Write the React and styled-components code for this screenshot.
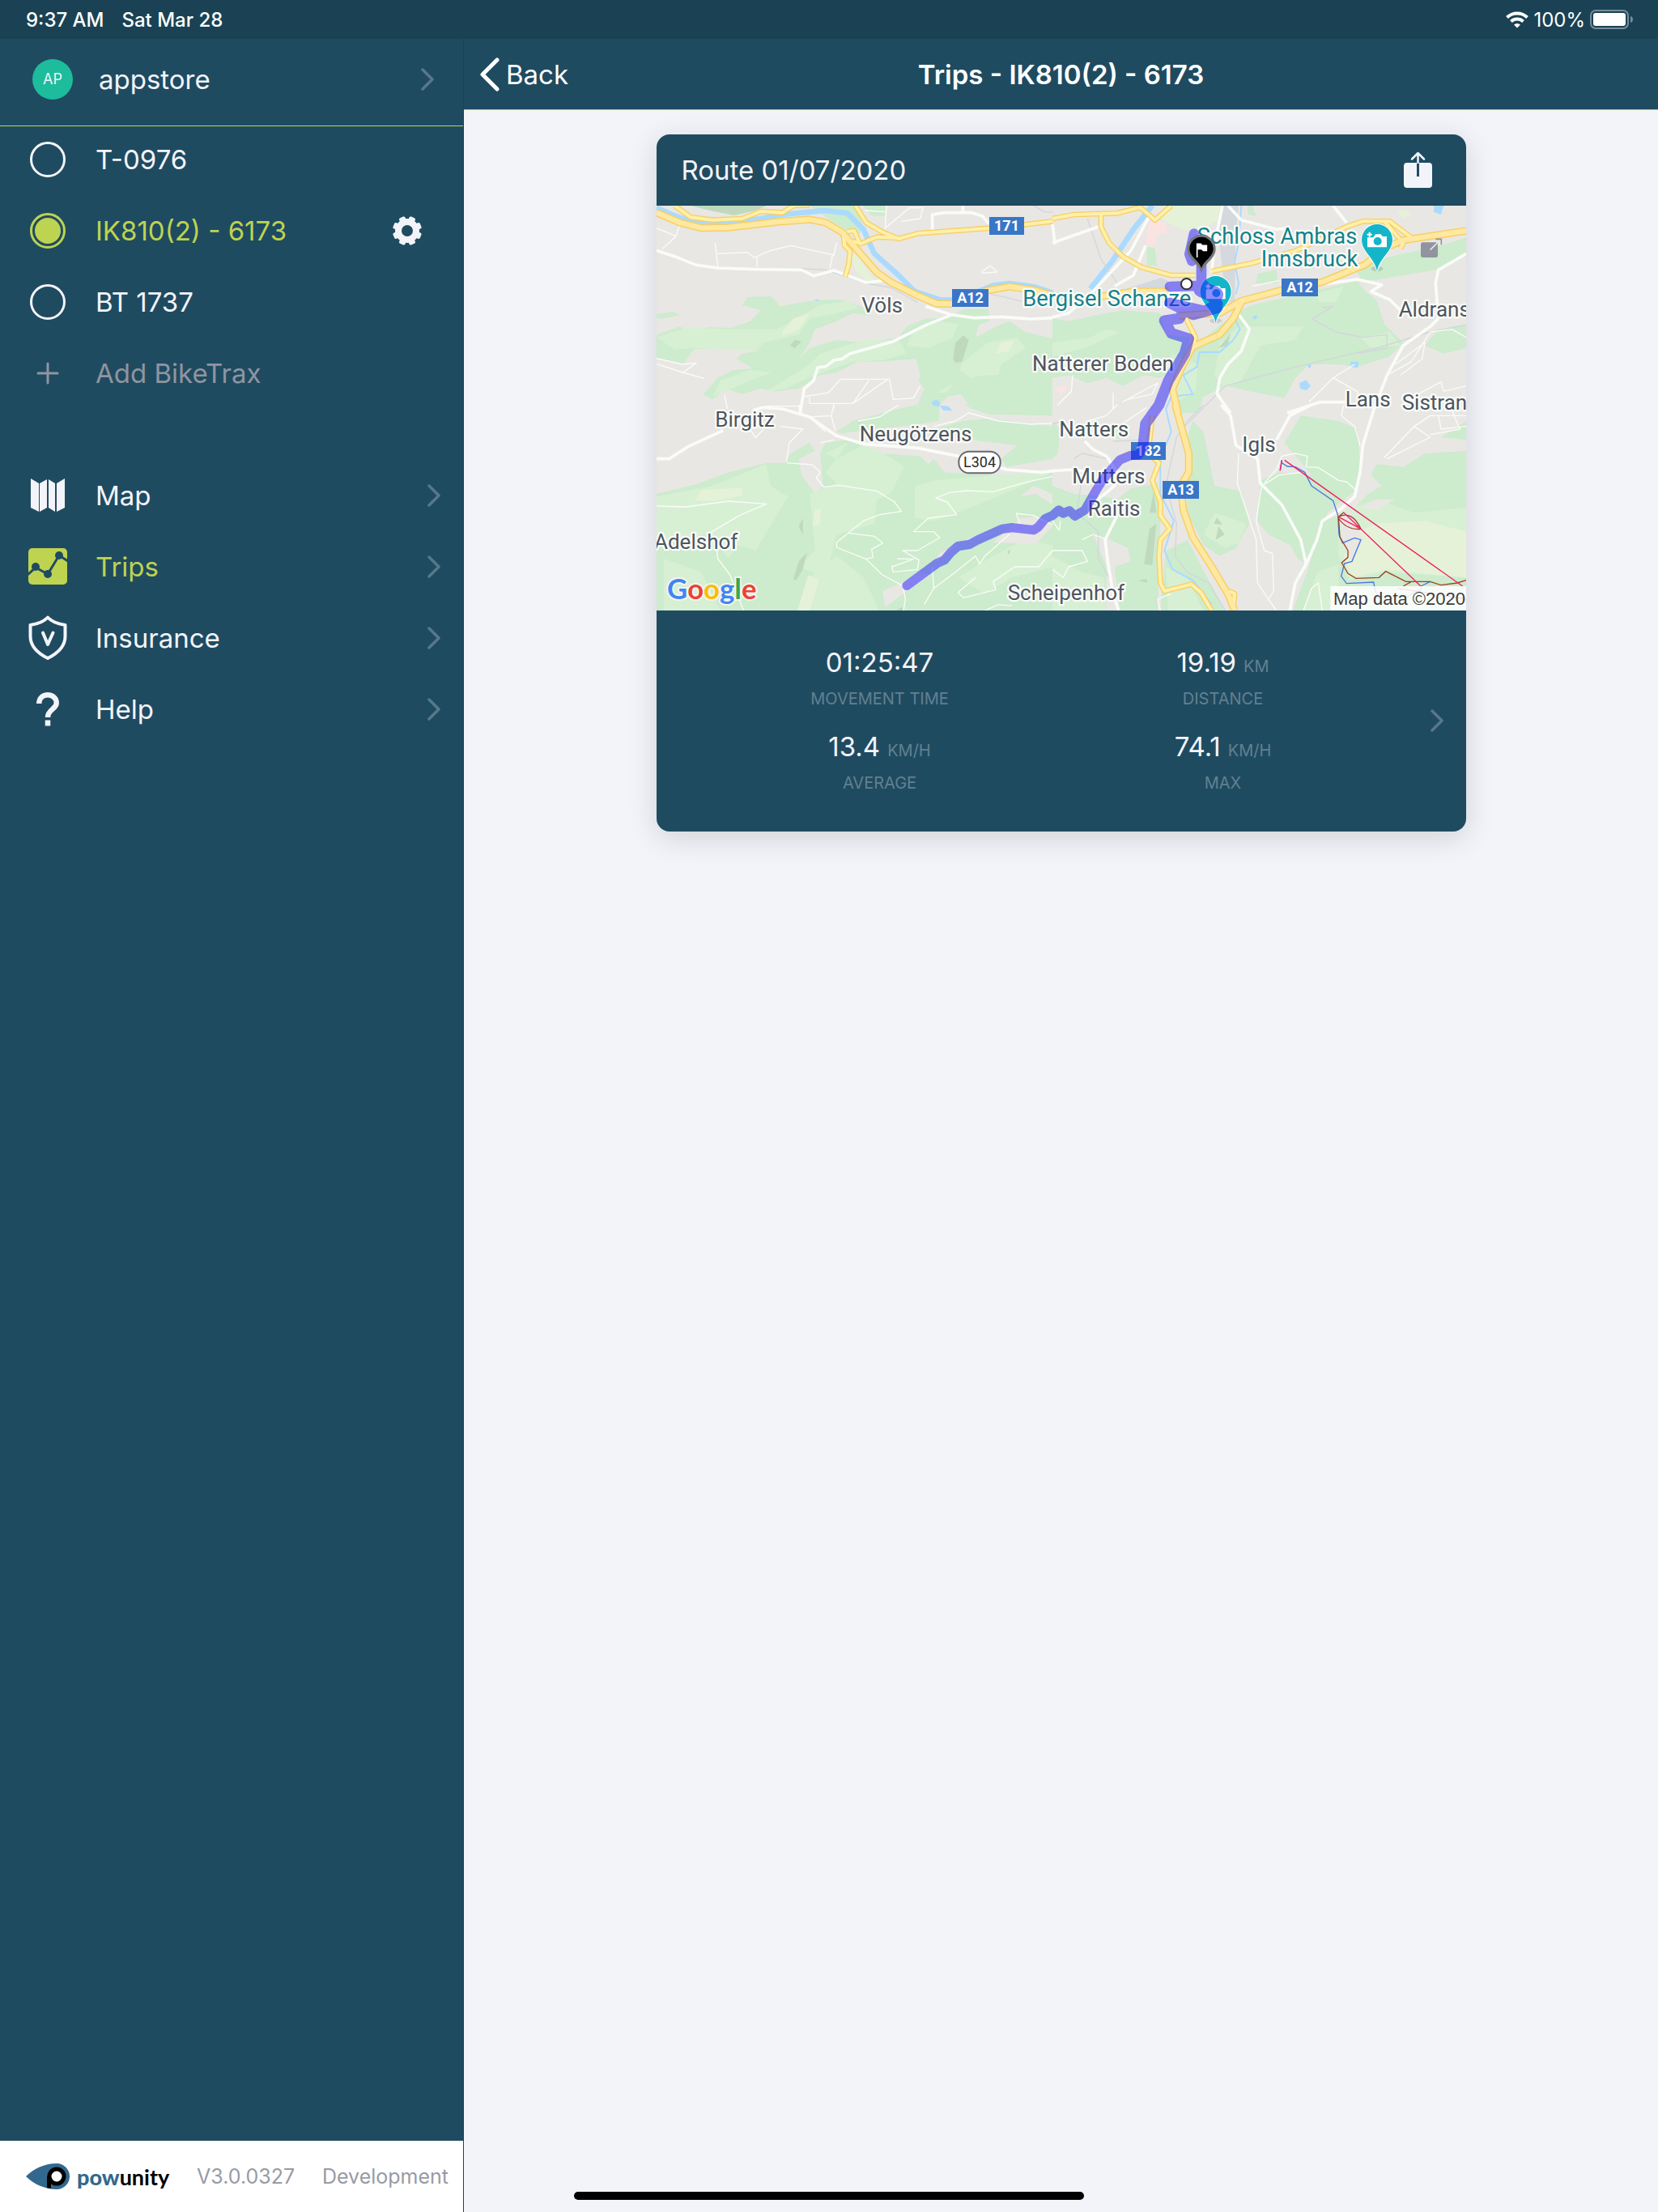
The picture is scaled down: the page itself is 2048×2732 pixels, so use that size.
import React, { useState } from 'react'
import styled, { createGlobalStyle } from 'styled-components'

const bikes = ['T-0976', 'IK810(2) - 6173', 'BT 1737'];

const stats = [
    { value: '01:25:47', label: 'Movement time' },
    { value: '19.19', unit: 'km', label: 'Distance' },
    { value: '13.4', unit: 'km/h', label: 'Average' },
    { value: '74.1', unit: 'km/h', label: 'Max' },
];

// map data is split in four tiles, each one has its own origin on the 3000 x 1500 canvas
const tiles = [
    {
        id: 'nw', x: -33, y: -12,
        green: 'M33 490L120 460 150 480 230 462 310 465 380 440 420 400 350 380 370 350 460 348 490 385 620 362 720 360 830 400 825 420 760 410 700 440 620 470 600 520 560 585 600 540 700 510 800 520 930 500 960 460 1030 430 1110 430 1170 395 1265 395 1265 440 1225 455 1215 500 1290 460 1340 440 1400 480 1500 505V765H1200L1160 710 1110 720 1060 775H990L1025 690 1005 660 1010 640 995 580 860 590 780 590 700 630 640 640 560 690 470 700 420 690 350 710 290 690 240 730 205 712 260 650 320 620 390 615 330 580 350 560 420 550 260 540 170 545 130 600 33 575ZM600 12H770L800 90 780 125 700 80ZM33 415L95 405 120 418 60 430 33 430ZM800 12H880V50H830Z',
        light: 'M33 500L140 465 320 470 480 470 640 380 740 365 780 390 700 410 600 430 560 490 430 520 400 550 170 540 100 545ZM440 700L600 600 640 560 800 510 930 510 960 560 870 585 760 590 620 640 510 690ZM240 720L270 660 380 620 460 630 380 660ZM960 530L980 480 1080 440 1150 450 1130 500 1040 540ZM1155 620L1170 590 1260 520 1370 500 1400 540 1310 600 1300 640 1250 640 1200 650ZM1070 705L1130 672 1110 705Z',
        yellow: 'M500 480L540 430 600 410 560 470 500 495ZM1290 560L1310 520 1355 515 1340 550ZM750 190L780 200 840 290 810 290 770 250Z',
        dark: 'M160 12H440L400 30 320 48 230 30ZM1132 580L1140 520 1170 493 1190 510 1165 590 1140 594ZM528 530L545 510 570 515 545 540Z',
        lake: 'M1052 740L1070 730 1085 742 1080 757 1058 752ZM1085 755L1115 755 1128 772 1095 770ZM618 360L638 360 628 367Z',
        river: 'M33 20L90 45 170 75 300 80 500 45 660 30 740 40 800 100 840 190 930 270 990 330 1080 360 1130 362M1220 332L1280 308 1340 300 1430 312 1500 335',
        rail: 'M570 245L660 250 810 300 900 315 1000 370M1270 340L1320 350 1400 370M1430 12L1470 35 1500 36',
        motorway: 'M33 38L120 75 200 95 300 93 480 72 600 63 660 75 720 110 780 180 850 260 900 295 1000 345 1070 375 1130 376M1250 328L1340 312 1430 325 1500 345',
        road: 'M770 12L810 75 870 110 930 135 1000 115 1270 95 1400 82 1500 70M785 155L850 128 930 132M100 12L160 55 240 65 350 60 420 33 500 38 540 12 600 10M740 108L765 105 785 150 760 145M725 120L730 160 750 180 745 230 732 275',
        main: 'M33 178L100 200 180 232 260 243 400 248 570 250 615 272 690 252 810 297 870 290M1030 385L1120 415 1210 428 1310 424 1420 432 1500 428M1130 415L1030 455 910 515 750 560 720 580 690 585 660 608 630 612 615 660 580 690 565 780M1055 105V45L1100 38 1200 38 1240 50 1265 80M1168 12V38',
        minor: 'M250 150L260 235M258 190L370 185 395 205 450 180 530 160 690 195 700 150M685 195L675 245M405 205V240M33 95L105 125 118 85M105 125L55 172M33 578L130 600 180 595 130 630 33 598M130 630L210 652M575 720L670 705 715 655 890 655 760 745 600 745 600 720M760 745L820 660M895 650L910 730 985 725 1010 680M690 765V745M885 12L880 95 970 20 1020 20 1010 60 940 70M1240 255L1270 235 1295 258 1240 262ZM285 715L295 765M400 765L440 755 560 755M805 30L880 35',
    },
    {
        id: 'ne', x: 1467, y: -12,
        green: 'M0 430L60 440 200 410 260 400 400 410 420 490 510 500 490 570 430 640 390 650 340 640 260 680 200 650 130 670 60 640 0 650ZM540 520L640 440 700 400 740 380 1000 320 1130 290 1160 330 1200 360 1230 450 1300 520 1250 570 1130 610 1060 600 950 600 900 650 860 725 760 705 640 680 600 700 560 720 540 780H460L440 700 480 600ZM1130 260L1180 220 1300 190 1440 160 1533 130V190L1420 250 1300 270 1150 295ZM760 265L830 250 835 300 755 300ZM350 165L380 170 388 235 350 232ZM1380 530L1430 470 1533 450V540L1450 560ZM725 12H740L755 50 725 45Z',
        light: 'M620 520L690 460 930 460 900 510 770 530 700 660 640 690 600 640ZM970 340L1080 310 1050 370 990 370ZM0 520L140 500 200 470 250 480 120 540 0 570ZM440 560L540 600 530 700 460 740ZM1140 500L1250 480 1290 530 1180 540Z',
        yellow: 'M410 12H620L610 70 540 100 480 100 400 60ZM1280 35L1310 25 1330 45 1300 58Z',
        dark: 'M615 540L660 485 650 530Z',
        lake: 'M915 670L940 658 958 680 940 697 918 690ZM1415 12H1450L1440 45 1412 35ZM1105 590L1135 590 1132 612 1105 610ZM740 425L755 417 760 425 748 435ZM945 605L955 598 960 608 950 615Z',
        pink: 'M350 100L360 70 420 75 425 115 385 120 380 160 345 160ZM5 690L40 680 60 690 30 708Z',
        station: 'M625 12H690L680 120 675 370 640 370 630 250 615 120ZM240 330L400 280 430 290 420 320 260 325Z',
        river: 'M370 12L300 100 220 220 140 320M0 340L40 350',
        stream: 'M700 12L690 150 675 220 690 300 680 340M680 440L695 470 670 510 620 555 545 555 535 610 485 640 520 710 440 720 420 765',
        rail: 'M640 680L900 610 1200 540 1400 480 1533 455M640 680L600 720 480 840M965 430L1040 385 1000 390M960 430L1050 480 1150 500 1240 490 1240 540 1130 560M130 60L180 210 240 300',
        motorway: 'M170 350L300 330 430 330M470 420L620 410 700 365 850 325 1000 295 1160 230 1230 170 1300 140 1400 125 1533 105M700 370L670 430 620 490 520 535 480 610 445 690 465 780',
        road: 'M0 60L80 45 240 40 325 18 380 65 440 12M180 45L180 90 210 150 260 200 330 240 440 270 530 270M590 255L740 225 900 180 1090 90 1150 70 1250 70 1330 130M1230 70L1300 150 1290 170M490 420L510 460 530 500 520 540',
        main: 'M630 12L600 160 590 260M360 50L290 180 150 330 60 410 0 425M650 12L700 65 830 100 880 95M1040 12L1090 75M690 415L730 470 700 550 650 600 620 650 610 710 660 780M1430 430L1400 460 1300 530 1240 640 1190 770M880 320L1130 285 1220 305 1180 330 1250 360 1290 400M1533 190L1430 250 1420 300 1430 430M870 780L990 740 1100 740M0 150L170 90M0 80L10 155M345 160L300 270 230 310',
        minor: 'M75 640L70 700 20 750M225 705L225 765M260 740L350 690 390 670 370 710 280 730M1240 640L1330 590 1400 480M1270 600L1380 520 1370 580 1290 640M1300 740L1440 665 1450 700M1040 650L1130 700 1140 765M1400 480L1480 470 1533 500M740 310L840 290M950 740L1040 650 1120 600M1450 700L1533 680',
    },
    {
        id: 'sw', x: -33, y: 738,
        green: 'M33 330L180 295 300 250 440 215 510 215 530 180 600 140 620 170 560 200 570 260 620 330 650 300 640 180 660 140 740 130 860 180 1010 190 1040 220 1060 200 1100 250 1180 255 1290 260 1500 250V765H33ZM700 100L760 60 930 15 1000 0H1080V60L980 75 720 105ZM1170 0H1500V40L1260 35ZM1060 90L1170 60 1260 50 1500 80V200L1330 230 1310 200 1370 150 1200 130Z',
        light: 'M33 340L240 300 440 220 455 300 520 340 400 540 330 520 300 570 230 480 33 500ZM600 330L700 290 660 250 700 200 800 150 860 170 950 230 900 330 850 350 840 440 700 480 660 640 560 600 620 540 610 420ZM990 300L1070 280 1300 260 1500 250 1320 330 1200 380 1060 430 990 420ZM700 560L800 640 860 765H560L600 640ZM1150 640L1280 560 1400 500 1500 520V600L1350 640 1250 700ZM60 570L200 620 270 765H60ZM660 180L740 140 700 200Z',
        yellow: 'M175 355L200 315 350 308 350 335 250 355ZM610 450L620 390 642 385 640 440ZM555 762L595 630 635 650 600 762Z',
        dark: 'M540 645L560 580 590 548 575 610 550 650ZM560 450L575 420 575 480ZM1332 545L1344 535 1340 555ZM920 762L945 748V762Z',
        bare: 'M870 690L940 660 1010 620 1050 630 960 690 880 750ZM1280 510L1380 420 1440 415 1500 450 1440 515ZM1380 340L1430 300 1500 330V370L1440 330ZM1080 550L1200 490 1330 460 1160 510 1060 590Z',
        lake: 'M1080 3L1110 5 1128 20 1100 18ZM778 68L788 65 785 72Z',
        main: 'M33 200L80 200 150 155 280 95M390 20L430 10 500 15 600 45 700 115 800 145 1000 160 1200 200 1330 240 1460 250 1500 245M565 0V30',
        minor: 'M33 375L140 378 300 357 440 367 340 410 230 475M255 520L260 570 305 630 355 762M515 210L525 140 575 90 490 80M515 215L610 222 640 250 625 270 652 305 710 298 850 320 915 360 940 395 860 407 800 430 700 510 700 528 810 572 870 630 945 670 955 720 948 762M745 475L840 487 872 512 830 535 835 565 810 572M1500 265L1390 290 1280 322 1180 318 1120 325 1068 345 1110 360 1145 407 1040 420 985 470 1060 470 1082 492 1000 540 945 540 1005 575 1000 610 910 620 905 600 985 572 925 570M1055 600L1060 680 1025 740M1060 680L1140 620 1215 560 1230 590 1250 560 1340 480M1500 540L1450 600 1360 600 1280 655 1290 685 1170 715 1150 695 1215 640M1060 80L1140 60 1190 30 1300 60 1420 72 1500 68M360 60L400 122 430 90M690 0L680 40 695 95M780 60L860 45 930 0M1365 402L1430 410 1500 445M1380 440L1365 402M1250 762L1300 740 1350 745M640 140L690 130M680 40L600 45 660 100',
    },
    {
        id: 'se', x: 1467, y: 738,
        green: 'M0 300L80 330 190 340 240 350 290 310 390 290 400 430 390 765H250L230 600 290 580 280 530 190 490 150 480 0 440ZM0 440L150 480 200 600 200 765H0ZM490 150L520 60 560 100 600 300 700 320 730 440 680 530 620 560 560 520 500 400ZM420 540L500 500 640 765H400ZM770 280L840 250 960 260 860 140 920 40 1060 60 1130 90 1140 220 1120 320 1020 400 980 500 940 590 910 570 880 520 800 480 760 430ZM950 600L1000 430 1100 400 1170 330 1220 300 1180 260 1200 220 1300 230 1380 180 1533 170V765H890ZM0 60L30 90 20 180 0 200ZM180 100L260 80 250 130ZM1440 120L1533 60V130Z',
        light: 'M1060 560V400L1200 350 1340 400 1533 380V640L1230 620 1100 650ZM560 480L600 400 720 440 690 510 640 530ZM0 560L110 620 190 640 200 765H0ZM980 620L1060 590 1060 765H930ZM420 600L500 640 560 765H430Z',
        yellow: 'M1080 560L1130 470 1200 440 1380 430 1533 470V640L1240 610 1110 640Z',
        dark: 'M340 590L360 460 385 440 370 595ZM605 500L615 450 638 480ZM360 400L375 320 385 400ZM598 440L610 418 630 445ZM320 650L350 645 350 660Z',
        bare: 'M1140 380L1200 350 1270 350 1200 390ZM1060 400L1110 400 1150 500 1110 580 1080 520Z',
        stream: 'M420 12L440 100 400 200 400 330 450 430 415 540 445 610 520 650 590 740',
        rail: 'M560 0L500 60 460 120 420 300 460 440 455 560 500 620 580 660 640 762M0 70L40 60M225 135L330 130M80 200L110 180 200 200M110 270L90 400 170 470 170 570 210 640',
        motorway: 'M455 0L505 180 505 250 475 300 485 390 520 490 590 600 650 700 675 762',
        road: 'M370 40L355 180 395 215 370 280 400 360 400 410 435 460 400 500 395 560 400 660 415 690 515 665 550 695 590 762M655 690L675 700 670 750',
        main: 'M625 0L660 40 680 150 760 200 770 290 850 370 920 500 940 590 900 660 880 762M940 590L980 500 1000 430 1070 385 1120 340 1140 250 1150 150 1190 20M830 130L880 40 960 0M0 245L70 240 150 250M120 135L150 165 200 190 240 250 230 300 170 350M240 410L195 500 205 580 225 700 245 762',
        minor: 'M690 180L685 290 755 500 760 660 800 720 830 762M775 300L755 430 785 540 815 550 820 690 800 720M785 290L830 240 850 190 900 180 945 190 940 230 985 232 1060 280 1090 285 1130 320M785 295L840 260 930 250M1240 200L1400 120 1340 80 1400 40 1533 40M1430 40L1440 90 1533 80M1480 20L1510 90 1400 110M1230 195L1340 80M1080 0L1070 40 1120 80 1140 150M0 610L40 640 60 600 130 580 110 540 0 540M110 500L150 480 190 495M440 700L390 720 400 762M930 762L960 680 985 660 1000 762M130 60L200 40 240 0M260 70L350 10M0 430L25 465 30 430',
    },
];

const layers = [
    { key: 'green', fill: '#cdebcd' },
    { key: 'light', fill: '#d7f0d4' },
    { key: 'yellow', fill: '#e6f2d8' },
    { key: 'bare', fill: '#e9e7e4' },
    { key: 'dark', fill: '#bfd9bf' },
    { key: 'pink', fill: '#fbe3e1' },
    { key: 'station', fill: '#d5d8dd' },
    { key: 'lake', fill: '#aadaff' },
    { key: 'river', stroke: '#aadaff', width: 20 },
    { key: 'stream', stroke: '#aadaff', width: 6 },
    { key: 'rail', stroke: '#d3d6da', width: 4 },
    { key: 'minor', stroke: '#fafcf8', width: 4 },
    { key: 'main', stroke: '#fafcf8', width: 11 },
    { key: 'road', stroke: '#f7cf64', width: 20 },
    { key: 'motorway', stroke: '#f7cf64', width: 28 },
    { key: 'road', stroke: '#fff0a8', width: 12 },
    { key: 'motorway', stroke: '#ffe8a0', width: 19 },
];

const places = [
    ['Völs', 760, 396], ['Aldrans', 2750, 411], ['Natterer Boden', 1392, 613],
    ['Lans', 2552, 743], ['Sistrans', 2762, 756], ['Birgitz', 217, 820],
    ['Neugötzens', 752, 874], ['Natters', 1492, 856], ['Mutters', 1540, 1028],
    ['Raitis', 1598, 1148], ['Igls', 2170, 913], ['Adelshof', -9, 1271],
    ['Scheipenhof', 1301, 1460],
];

const shields = [
    ['171', 1233, 42, 129], ['A12', 1095, 309, 135], ['A12', 2316, 270, 135],
    ['182', 1758, 876, 129], ['A13', 1875, 1020, 135],
];

const Sight = ({ x, y }) => (
    <g transform={`translate(${x} ${y})`}>
        <ellipse cx="0" cy="108" rx="22" ry="10" fill="#000" opacity=".12" />
        <path d="M0 116C-10 66-57 45-57 0A57 57 0 0 1 57 0C57 45 10 66 0 116Z" fill="#14b5c9" stroke="#fafcf8" strokeWidth="6" paintOrder="stroke" />
        <path d="M-36-8H-14L-6-20H14L20-12H36V28H-36Z" fill="#fff" />
        <circle cx="2" cy="6" r="15" fill="#14b5c9" />
        <path d="M-28-28V-10M-37-19H-19" stroke="#fff" strokeWidth="6" />
    </g>
);

const RouteMap = () => (
    <MapSvg viewBox="0 0 3000 1500" preserveAspectRatio="xMidYMid slice" role="img" aria-label="Route map">
        <rect width="3000" height="1500" fill="#e9e7e4" />
        {layers.map((layer, i) => (
            <g key={i} fill={layer.fill || 'none'} stroke={layer.stroke} strokeWidth={layer.width} strokeLinejoin="round">
                {tiles.map((tile) => tile[layer.key] && (
                    <path key={tile.id} transform={`translate(${tile.x} ${tile.y})`} d={tile[layer.key]} />
                ))}
            </g>
        ))}

        {/* ski lifts and bike trails */}
        <g transform="translate(1467 738)" fill="none" strokeWidth="4">
            <path stroke="#4a78e0" d="M850 205L845 240M850 215L870 228 900 230 935 250 960 300 1040 355 1058 410 1062 480 1075 512 1120 493 1143 500 1110 580 1082 588 1070 635 1090 662 1190 657 1197 690 1220 740M1365 672L1400 655M1300 720L1370 680" />
            <path stroke="#a04020" d="M1080 398L1060 415 1065 490 1095 540 1095 565 1072 585 1095 625 1125 643 1210 640 1235 617 1310 655 1400 655 1440 668 1500 660 1533 650M1060 415Q1110 390 1143 460 1090 465 1060 420M1300 672L1330 655" />
            <path stroke="#ef2060" d="M860 205L1520 672M1080 400L1365 672M1060 415L1140 458M850 205L843 245M1280 680L1533 720" />
        </g>

        {places.map(([name, x, y]) => <PlaceName key={name} x={x} y={y}>{name}</PlaceName>)}
        <PlaceName $sight x="1357" y="373">Bergisel Schanze</PlaceName>
        <PlaceName $sight x="2596" y="140" textAnchor="end">Schloss Ambras</PlaceName>
        <PlaceName $sight x="2599" y="225" textAnchor="end">Innsbruck</PlaceName>
        <Sight x={2670} y={126} />
        <Sight x={2072} y={318} />

        {shields.map(([name, x, y, width]) => (
            <g key={name + x}>
                <rect x={x} y={y} width={width} height="66" fill="#3a76c8" />
                <ShieldText x={x + width / 2} y={y + 51}>{name}</ShieldText>
            </g>
        ))}
        <rect x="1120" y="911" width="154" height="80" rx="38" fill="#fff" stroke="#66696d" strokeWidth="6" />
        <ShieldText $dark x="1197" y="970">L304</ShieldText>

        <g fill="none" stroke="#1a10ff" strokeWidth="34" strokeLinecap="round" strokeLinejoin="round" opacity=".48">
            <path d="M1992 104L1975 180 1984 205M2019 140V300M1902 300L2030 296 2055 335 2080 365 2030 390 1900 360 1990 405 2078 380" strokeWidth="38" />
            <path d="M1952 393L1938 418 1882 426 1908 473 1972 493 1957 548 1897 648 1862 738 1812 808 1802 898" strokeWidth="40" />
            <path d="M1802 898L1787 923 1755 926 1717 942 1677 988 1650 1020 1627 1058 1587 1128 1550 1150 1530 1130 1507 1140 1490 1128 1467 1148 1440 1160 1415 1190 1397 1202 1317 1193 1280 1198 1187 1240 1160 1255 1117 1262 1090 1285 1067 1313 1040 1325 927 1408" />
            <path d="M2020 310L2070 330" strokeWidth="60" />
        </g>
        <circle cx="1964" cy="290" r="20" fill="#fff" stroke="#333" strokeWidth="6" />
        <path d="M2019 250C2012 215 1966 200 1966 160A53 53 0 0 1 2072 160C2072 200 2026 215 2019 250Z" fill="#77767c" />
        <path d="M2019 232C2012 205 1975 190 1975 160A44 44 0 0 1 2063 160C2063 190 2026 205 2019 232Z" fill="#000" />
        <path d="M2003 192V142H2016L2022 148H2038V166H2026L2020 160H2003" fill="#fff" stroke="#fff" strokeWidth="5" />

        <rect x="2832" y="136" width="63" height="56" rx="8" fill="#9194a0" />
        <path d="M2867 164L2908 123" stroke="#e9e7e4" strokeWidth="5" />
        <path d="M2887 124H2908V145" fill="none" stroke="#9194a0" strokeWidth="5" />

        <Brand x="39" y="1458">
            <tspan fill="#4285f4">G</tspan><tspan fill="#ea4335">o</tspan><tspan fill="#fbbc05">o</tspan><tspan fill="#4285f4">g</tspan><tspan fill="#34a853">l</tspan><tspan fill="#ea4335">e</tspan>
        </Brand>
        <rect x="2497" y="1410" width="503" height="90" fill="#fff" opacity=".85" />
        <Credit x="2508" y="1478">Map data ©2020</Credit>
    </MapSvg>
);

const Chevron = () => (
    <ChevronSvg viewBox="0 0 16 28" aria-hidden="true"><path d="M2 2L14 14 2 26" /></ChevronSvg>
);

const GearIcon = () => (
    <svg width="36" height="36" viewBox="-18 -18 36 36" aria-hidden="true">
        <circle r="11" fill="none" stroke="currentColor" strokeWidth="8" />
        {[0, 1, 2, 3, 4, 5, 6, 7].map((i) => (
            <rect key={i} x="-4" y="-18" width="8" height="8" rx="2" fill="currentColor" transform={`rotate(${i * 45 + 22.5})`} />
        ))}
    </svg>
);

const MapIcon = () => (
    <svg width="42" height="42" viewBox="0 0 42 42" fill="currentColor" aria-hidden="true">
        <path d="M0 0L10 6V41L0 36ZM11 6L20 1V36L11 41ZM22 1L30 6V41L22 36ZM32 6L42 0V36L32 41Z" />
    </svg>
);

const TripsIcon = () => (
    <svg width="48" height="46" viewBox="0 0 48 46" aria-hidden="true">
        <rect width="48" height="45" rx="5" fill="currentColor" />
        <path d="M-1 33L9 24 24 32 38 9 49 16" fill="none" stroke="#1f4b61" strokeWidth="3" />
        <g fill="#1f4b61"><circle cx="9" cy="23" r="5" /><circle cx="24" cy="32" r="5" /><circle cx="38" cy="9" r="5" /></g>
    </svg>
);

const InsuranceIcon = () => (
    <svg width="48" height="56" viewBox="0 0 48 56" fill="none" stroke="currentColor" strokeWidth="4" strokeLinejoin="round" aria-hidden="true">
        <path d="M24 2.500C19 8 10 11 2.500 12V26C2.500 38 12 47 24 53 36 47 45.500 38 45.500 26V12C38 11 29 8 24 2.500Z" />
        <path d="M18 21.500L24 36 30.500 21.500" strokeLinecap="round" />
    </svg>
);

const HelpIcon = () => (
    <svg width="28" height="42" viewBox="0 0 28 42" fill="none" stroke="currentColor" strokeWidth="6.500" aria-hidden="true">
        <path d="M3.250 14C3.250 7 8 3.250 14 3.250S24.750 7.500 24.750 13C24.750 21 14 21 14 31M14 34.500V41.500" />
    </svg>
);

const nav = [
    { name: 'Map', icon: <MapIcon /> },
    { name: 'Trips', icon: <TripsIcon />, active: true },
    { name: 'Insurance', icon: <InsuranceIcon /> },
    { name: 'Help', icon: <HelpIcon /> },
];

const App = () => {
    const [selected, setSelected] = useState('IK810(2) - 6173');

    return (
        <>
            <GlobalStyle />
            <Page>
                <StatusBar>
                    <span>9:37 AM</span>
                    <span>Sat Mar 28</span>
                    <StatusRight>
                        <svg width="28" height="21" viewBox="0 0 28 21" fill="none" stroke="#fff" strokeWidth="4" aria-hidden="true">
                            <path d="M1.500 7.500A18 18 0 0 1 26.500 7.500M6.500 12.500A11 11 0 0 1 21.500 12.500" />
                            <path d="M14 20.500L10 16.500A6 6 0 0 1 18 16.500Z" fill="#fff" stroke="none" />
                        </svg>
                        <Percent>100%</Percent>
                        <svg width="54" height="24" viewBox="0 0 54 24" aria-hidden="true">
                            <rect x="1" y="1" width="46" height="22" rx="6" fill="none" stroke="#768e99" strokeWidth="2" />
                            <rect x="4" y="4" width="40" height="16" rx="3" fill="#fff" />
                            <path d="M50 8C54 9 54 15 50 16Z" fill="#768e99" />
                        </svg>
                    </StatusRight>
                </StatusBar>
                <Body>
                    <Sidebar>
                        <Account href="#account">
                            <Avatar>AP</Avatar>
                            <Grow>appstore</Grow>
                            <Chevron />
                        </Account>
                        <List>
                            {bikes.map((bike) => (
                                <Row key={bike} $active={bike === selected}>
                                    <BikeLabel>
                                        <IconSlot>
                                            <Radio type="radio" name="bike" checked={bike === selected} onChange={() => setSelected(bike)} />
                                        </IconSlot>
                                        {bike}
                                    </BikeLabel>
                                    {bike === selected && <GearButton aria-label="Bike settings"><GearIcon /></GearButton>}
                                </Row>
                            ))}
                            <AddButton>
                                <IconSlot>
                                    <svg width="28" height="28" viewBox="0 0 28 28" stroke="currentColor" strokeWidth="3" strokeLinecap="round" aria-hidden="true">
                                        <path d="M14 2V26M2 14H26" />
                                    </svg>
                                </IconSlot>
                                Add BikeTrax
                            </AddButton>
                        </List>
                        <Menu>
                            {nav.map((item) => (
                                <MenuLink key={item.name} href={`#${item.name.toLowerCase()}`} $active={item.active}>
                                    <IconSlot>{item.icon}</IconSlot>
                                    <Grow>{item.name}</Grow>
                                    <Chevron />
                                </MenuLink>
                            ))}
                        </Menu>
                        <Footer>
                            <Logo>
                                <svg width="54" height="32" viewBox="0 0 54 32" aria-hidden="true">
                                    <path d="M0 16C10 6 24 0 38 0A16 16 0 0 1 38 32C24 32 10 26 0 16Z" fill="#33688e" />
                                    <circle cx="38" cy="16" r="9" fill="#fff" stroke="#000" strokeWidth="5" />
                                    <path d="M26 16H31V31L26 30Z" />
                                </svg>
                                <span><b>pow</b>unity</span>
                            </Logo>
                            <span>V3.0.0327</span>
                            <span>Development</span>
                        </Footer>
                    </Sidebar>
                    <Main>
                        <TopBar>
                            <BackButton>
                                <svg width="25" height="42" viewBox="0 0 25 42" fill="none" stroke="#fff" strokeWidth="5" strokeLinecap="round" strokeLinejoin="round" aria-hidden="true">
                                    <path d="M22 3L4 21 22 39" />
                                </svg>
                                Back
                            </BackButton>
                            <Title>Trips - IK810(2) - 6173</Title>
                        </TopBar>
                        <Content>
                            <Card>
                                <CardHeader>
                                    <CardTitle>Route 01/07/2020</CardTitle>
                                    <ShareButton aria-label="Share route">
                                        <svg width="36" height="46" viewBox="0 0 36 46" aria-hidden="true">
                                            <rect y="14" width="35" height="31" rx="4" fill="#f3f4f9" />
                                            <path d="M17.500 14V31" stroke="#1f4b61" strokeWidth="3" />
                                            <path d="M17.500 14V2M10 9.500L17.500 2 25 9.500" fill="none" stroke="#f3f4f9" strokeWidth="2.500" strokeLinecap="round" strokeLinejoin="round" />
                                        </svg>
                                    </ShareButton>
                                </CardHeader>
                                <RouteMap />
                                <CardFooter href="#route">
                                    <Stats>
                                        {stats.map((stat) => (
                                            <Stat key={stat.label}>
                                                <Value>{stat.value}{stat.unit && <Unit>{stat.unit}</Unit>}</Value>
                                                <StatLabel>{stat.label}</StatLabel>
                                            </Stat>
                                        ))}
                                    </Stats>
                                    <Chevron />
                                </CardFooter>
                            </Card>
                        </Content>
                    </Main>
                </Body>
                <HomeIndicator />
            </Page>
        </>
    )
}

export default App

const GlobalStyle = createGlobalStyle`
    * {
        box-sizing: border-box;
    }
    body {
        margin: 0;
        background: #f3f4f9;
        font-family: Inter, 'Liberation Sans', sans-serif;
    }
    a {
        color: inherit;
        text-decoration: none;
    }
    button {
        margin: 0;
        padding: 0;
        border: none;
        background: none;
        color: inherit;
        font: inherit;
        cursor: pointer;
    }
    svg {
        display: block;
        flex: none;
    }
`;
const Page = styled.div`
    display: flex;
    flex-direction: column;
    min-height: 100vh;
    color: #f3f4f9;
    font-size: 33px;
`;
const StatusBar = styled.header`
    display: flex;
    align-items: center;
    gap: 22px;
    height: 48px;
    padding: 0 30px 0 32px;
    background: #1a4254;
    color: #fff;
    font-size: 24px;
    font-weight: 500;
`;
const StatusRight = styled.div`
    display: flex;
    align-items: center;
    gap: 6px;
    margin-left: auto;
`;
const Percent = styled.span`
    font-weight: 400;
`;
const Body = styled.div`
    display: flex;
    flex: 1;
`;
const Sidebar = styled.aside`
    display: flex;
    flex-direction: column;
    flex: 0 0 573px;
    background: #1f4b61;
    border-right: 1px solid #1a4254;
`;
const Account = styled.a`
    display: flex;
    align-items: center;
    height: 108px;
    padding: 0 36px 8px 40px;
    gap: 32px;
    border-bottom: 1px solid #bed350;
`;
const Avatar = styled.span`
    display: flex;
    align-items: center;
    justify-content: center;
    width: 50px;
    height: 50px;
    border-radius: 50%;
    background: #1dbc9c;
    font-size: 18px;
`;
const Grow = styled.span`
    flex: 1;
`;
const List = styled.div`
    display: flex;
    flex-direction: column;
    gap: 6px;
`;
const Row = styled.div`
    display: flex;
    align-items: center;
    height: 82px;
    padding: 0 51px 0 35px;
    color: ${props => props.$active ? '#bed350' : '#f3f4f9'};
`;
const BikeLabel = styled.label`
    display: flex;
    align-items: center;
    flex: 1;
    gap: 35px;
`;
const IconSlot = styled.span`
    display: flex;
    align-items: center;
    justify-content: center;
    width: 48px;
`;
const Radio = styled.input`
    appearance: none;
    width: 44px;
    height: 44px;
    margin: 0;
    padding: 3px;
    border: 3px solid currentColor;
    border-radius: 50%;
    color: inherit;
    &:checked {
        background: currentColor content-box;
    }
`;
const GearButton = styled.button`
    color: #f3f4f9;
`;
const AddButton = styled.button`
    display: flex;
    align-items: center;
    gap: 35px;
    height: 82px;
    padding: 0 35px;
    color: #8f95a0;
`;
const Menu = styled.nav`
    display: flex;
    flex-direction: column;
    gap: 6px;
    margin-top: 69px;
`;
const MenuLink = styled.a`
    display: flex;
    align-items: center;
    gap: 35px;
    height: 82px;
    padding: 0 28px 0 35px;
    color: ${props => props.$active ? '#bed350' : '#f3f4f9'};
`;
const ChevronSvg = styled.svg`
    width: 16px;
    height: 28px;
    fill: none;
    stroke: #587889;
    stroke-width: 3.5;
    stroke-linecap: round;
    stroke-linejoin: round;
`;
const Footer = styled.footer`
    display: flex;
    align-items: center;
    justify-content: space-between;
    height: 88px;
    margin-top: auto;
    padding: 0 18px 0 32px;
    background: #fff;
    color: #979ba5;
    font-size: 25px;
`;
const Logo = styled.div`
    display: flex;
    align-items: center;
    gap: 9px;
    color: #000;
    font-family: Lato, sans-serif;
    font-size: 27px;
    font-weight: 700;
    b {
        color: #33688e;
    }
`;
const Main = styled.main`
    flex: 1;
    min-width: 0;
`;
const TopBar = styled.div`
    display: grid;
    grid-template-columns: 1fr auto 1fr;
    align-items: center;
    height: 88px;
    padding: 0 19px;
    background: #1f4b61;
    border-bottom: 1px solid #bed350;
    color: #fff;
`;
const BackButton = styled.button`
    display: flex;
    align-items: center;
    gap: 8px;
`;
const Title = styled.h1`
    margin: 0;
    font-size: 33px;
    font-weight: 600;
`;
const Content = styled.div`
    padding: 30px 24px;
`;
const Card = styled.article`
    max-width: 1000px;
    margin: 0 auto;
    overflow: hidden;
    background: #1f4b61;
    border-radius: 16px;
    box-shadow: 0 8px 36px rgba(0, 0, 0, 0.14);
`;
const CardHeader = styled.div`
    display: flex;
    align-items: center;
    justify-content: space-between;
    height: 88px;
    padding: 0 41px 0 31px;
    border-bottom: 1px solid #1a4254;
`;
const CardTitle = styled.h2`
    margin: 0;
    font-size: 33px;
    font-weight: 400;
`;
const ShareButton = styled.button`
    display: block;
`;
const CardFooter = styled.a`
    display: flex;
    align-items: center;
    padding: 39px 28px 40px 64px;
`;
const Stats = styled.div`
    display: grid;
    grid-template-columns: 1fr 1fr;
    flex: 1;
    gap: 14px 0;
    padding-right: 44px;
`;
const Stat = styled.div`
    text-align: center;
`;
const Value = styled.div`
    line-height: 50px;
`;
const Unit = styled.span`
    margin-left: 9px;
    color: #62808f;
    font-size: 20px;
    line-height: 20px;
    text-transform: uppercase;
`;
const StatLabel = styled.div`
    color: #62808f;
    font-size: 20px;
    line-height: 40px;
    text-transform: uppercase;
`;
const MapSvg = styled.svg`
    width: 100%;
    height: 500px;
`;
const PlaceName = styled.text`
    font-family: Roboto, sans-serif;
    font-size: ${props => props.$sight ? 82 : 78}px;
    fill: ${props => props.$sight ? '#13818c' : '#4d5560'};
    stroke: #fafcf8;
    stroke-width: 14px;
    stroke-linejoin: round;
    paint-order: stroke;
`;
const ShieldText = styled.text`
    font-family: Roboto, sans-serif;
    font-size: 54px;
    font-weight: ${props => props.$dark ? 400 : 700};
    fill: ${props => props.$dark ? '#2b2b2b' : '#fff'};
    text-anchor: middle;
`;
const Brand = styled.text`
    font-family: Lato, sans-serif;
    font-size: 104px;
    font-weight: 700;
    stroke: #f1f6ef;
    stroke-width: 12px;
    paint-order: stroke;
`;
const Credit = styled.text`
    font-family: 'Liberation Sans', sans-serif;
    font-size: 66px;
    fill: #3c3c3c;
`;
const HomeIndicator = styled.div`
    position: fixed;
    bottom: 15px;
    left: 50%;
    width: 630px;
    height: 10px;
    margin-left: -315px;
    border-radius: 5px;
    background: #000;
`;
